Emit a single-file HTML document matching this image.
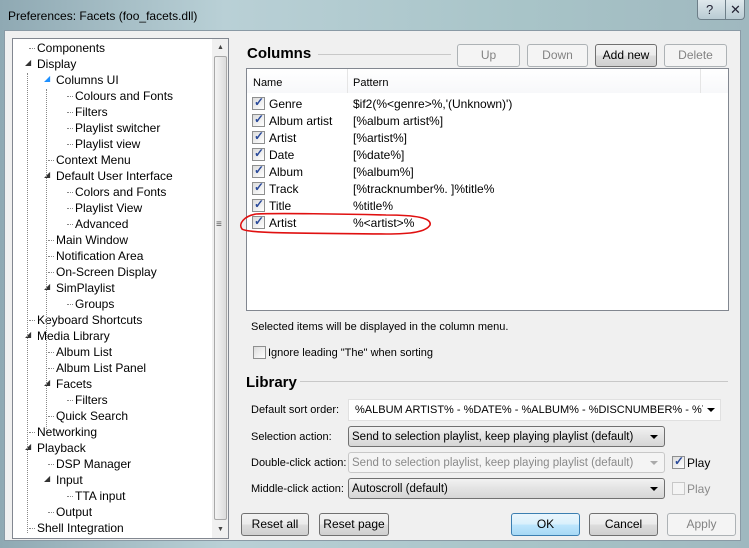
<!DOCTYPE html>
<html><head><meta charset="utf-8"><style>
*{margin:0;padding:0;box-sizing:border-box}
body{width:749px;height:548px;overflow:hidden;position:relative;font-family:"Liberation Sans",sans-serif;font-size:11px;color:#000;background:linear-gradient(90deg,#8fa9b3,#b9d0d6 30%,#a8c4c8 70%,#9fb8bf)}
.a{position:absolute;white-space:nowrap}
.client{position:absolute;left:4px;top:30px;width:737px;height:511px;background:#f0f0f0;border:1px solid #8a9aa5}
.tree{position:absolute;left:12px;top:38px;width:217px;height:501px;background:#fff;border:1px solid #828790}
.sb{position:absolute;left:212px;top:39px;width:16px;height:499px;background:#f0f0f0}
.btn{position:absolute;height:23px;border:1px solid #707070;border-radius:3px;background:linear-gradient(#f2f2f2,#ebebeb 50%,#dddddd 51%,#cfcfcf);text-align:center;line-height:21px;font-size:12px}
.dis{border-color:#adb2b5;background:#f4f4f4;color:#838383}
.cb{position:absolute;width:13px;height:13px;border:1px solid #8e8f8f;background:linear-gradient(135deg,#dcdcdc,#fff)}
.ck::after{content:"✓";position:absolute;left:1px;top:-3px;font-size:12px;color:#2a4a9a;font-weight:bold}
.sel{position:absolute;height:21px;border:1px solid #707070;border-radius:3px;background:linear-gradient(#f2f2f2,#e3e3e3 50%,#d6d6d6);font-size:11.5px;line-height:20px;padding-left:3px;overflow:hidden}
.arr{position:absolute;right:6px;top:8px;width:0;height:0;border-left:4px solid transparent;border-right:4px solid transparent;border-top:4px solid #000}
.h{font-weight:bold;font-size:15px}
</style></head><body>
<div class="a" style="left:8px;top:9px;font-size:12px;color:#000">Preferences: Facets (foo_facets.dll)</div>
<div class="a" style="left:697px;top:0;width:48px;height:20px;border:1px solid #6d7e88;border-top:none;border-radius:0 0 4px 4px;background:linear-gradient(#dfe8ec,#b9cbd3)"></div>
<div class="a" style="left:725px;top:0;width:1px;height:20px;background:#6d7e88"></div>
<div class="a" style="left:706px;top:2px;font-size:13px;color:#223">?</div>
<div class="a" style="left:730px;top:2px;font-size:13px;color:#223">✕</div>
<div class="client"></div>
<div class="tree"></div>
<div class="sb"></div>
<div class="a" style="left:214px;top:56px;width:13px;height:464px;border:1px solid #a8a8a8;border-radius:2px;background:linear-gradient(90deg,#f3f3f3,#dcdcdc)"></div>
<div class="a" style="left:216px;top:219px;font-size:10px;color:#555">≡</div>
<div class="a" style="left:217px;top:44px;font-size:7px;color:#444">▲</div>
<div class="a" style="left:217px;top:526px;font-size:7px;color:#444">▼</div>
<div id="t"></div>
<div class="a h" style="left:247px;top:45px">Columns</div>
<div class="a" style="left:318px;top:54px;width:133px;height:1px;background:#c8c8c8"></div>
<div class="btn dis" style="left:457px;top:44px;width:63px">Up</div>
<div class="btn dis" style="left:527px;top:44px;width:61px">Down</div>
<div class="btn" style="left:595px;top:44px;width:62px">Add new</div>
<div class="btn dis" style="left:664px;top:44px;width:63px">Delete</div>
<div class="a" style="left:246px;top:68px;width:483px;height:243px;background:#fff;border:1px solid #828790"></div>
<div class="a" style="left:247px;top:69px;width:481px;height:24px;background:linear-gradient(#fff,#f7f8fa)"></div>
<div class="a" style="left:347px;top:69px;width:1px;height:24px;background:#e5e5e5"></div>
<div class="a" style="left:700px;top:69px;width:1px;height:24px;background:#e5e5e5"></div>
<div class="a" style="left:253px;top:77px">Name</div>
<div class="a" style="left:353px;top:77px">Pattern</div>
<div id="r"></div>
<svg class="a" style="left:236px;top:210px" width="202" height="28"><path d="M20 4 C8 6 2 14 6 19 C12 24 80 23 150 24 C175 24 190 22 194 15 C196 8 180 5 150 5 C110 4 40 3 20 4" fill="none" stroke="#e01010" stroke-width="1.6"/></svg>
<div class="a" style="left:251px;top:321px">Selected items will be displayed in the column menu.</div>
<div class="cb" style="left:253px;top:346px"></div>
<div class="a" style="left:268px;top:347px">Ignore leading "The" when sorting</div>
<div class="a h" style="left:246px;top:374px">Library</div>
<div class="a" style="left:300px;top:381px;width:428px;height:1px;background:#c8c8c8"></div>
<div class="a" style="left:251px;top:404px">Default sort order:</div>
<div class="a" style="left:348px;top:399px;width:373px;height:22px;background:#fff;border:1px solid #e0e0e0;padding:4px 0 0 6px;font-size:11px;overflow:hidden">%ALBUM ARTIST% - %DATE% - %ALBUM% - %DISCNUMBER% - %TR</div>
<div class="a" style="left:703px;top:400px;width:17px;height:20px;background:#fff"><span class="arr" style="top:8px;right:5px"></span></div>
<div class="a" style="left:251px;top:431px">Selection action:</div>
<div class="sel" style="left:348px;top:426px;width:317px">Send to selection playlist, keep playing playlist (default)<span class="arr"></span></div>
<div class="a" style="left:251px;top:457px">Double-click action:</div>
<div class="sel" style="left:348px;top:452px;width:317px;border-color:#c8c8c8;background:#f4f4f4;color:#8a8a8a">Send to selection playlist, keep playing playlist (default)<span class="arr" style="border-top-color:#aaa"></span></div>
<div class="cb ck" style="left:672px;top:456px"></div>
<div class="a" style="left:687px;top:456px;font-size:12px">Play</div>
<div class="a" style="left:251px;top:483px">Middle-click action:</div>
<div class="sel" style="left:348px;top:478px;width:317px">Autoscroll (default)<span class="arr"></span></div>
<div class="cb" style="left:672px;top:482px;border-color:#c8c8c8;background:#f4f4f4"></div>
<div class="a" style="left:687px;top:482px;color:#8a8a8a;font-size:12px">Play</div>
<div class="btn" style="left:241px;top:513px;width:68px">Reset all</div>
<div class="btn" style="left:319px;top:513px;width:70px">Reset page</div>
<div class="btn" style="left:511px;top:513px;width:69px;border-color:#3c7fb1;background:linear-gradient(#eaf6fd,#d9f0fc 50%,#bee6fd 51%,#a7d9f5)">OK</div>
<div class="btn" style="left:589px;top:513px;width:69px">Cancel</div>
<div class="btn dis" style="left:667px;top:513px;width:69px">Apply</div>
<script>
var T=[["Components",0,0],["Display",0,1],["Columns UI",1,2],["Colours and Fonts",2,0],["Filters",2,0],["Playlist switcher",2,0],["Playlist view",2,0],["Context Menu",1,0],["Default User Interface",1,1],["Colors and Fonts",2,0],["Playlist View",2,0],["Advanced",2,0],["Main Window",1,0],["Notification Area",1,0],["On-Screen Display",1,0],["SimPlaylist",1,1],["Groups",2,0],["Keyboard Shortcuts",0,0],["Media Library",0,1],["Album List",1,0],["Album List Panel",1,0],["Facets",1,1],["Filters",2,0],["Quick Search",1,0],["Networking",0,0],["Playback",0,1],["DSP Manager",1,0],["Input",1,1],["TTA input",2,0],["Output",1,0],["Shell Integration",0,0]];
var h="";T.forEach(function(t,i){var y=41+i*16,x=37+t[1]*19;
if(t[2])h+='<div class="a" style="left:'+(x-12)+'px;top:'+(y+1)+'px;font-size:8px;color:'+(t[2]==2?'#1e90ff':'#333')+'">◢</div>';
else h+='<div class="a" style="left:'+(x-8)+'px;top:'+(y+7)+'px;width:6px;border-top:1px dotted #888"></div>';
h+='<div class="a" style="left:'+x+'px;top:'+y+'px;font-size:12px">'+t[0]+'</div>';});
h+='<div class="a" style="left:27px;top:73px;height:460px;border-left:1px dotted #888"></div>';
h+='<div class="a" style="left:46px;top:89px;height:340px;border-left:1px dotted #888"></div>';
document.getElementById("t").innerHTML=h;
var R=[["Genre","$if2(%&lt;genre&gt;%,'(Unknown)')"],["Album artist","[%album artist%]"],["Artist","[%artist%]"],["Date","[%date%]"],["Album","[%album%]"],["Track","[%tracknumber%. ]%title%"],["Title","%title%"],["Artist","%&lt;artist&gt;%"]];
h="";R.forEach(function(r,i){var y=97+i*17;h+='<div class="cb ck" style="left:252px;top:'+y+'px"></div><div class="a" style="left:269px;top:'+y+'px;font-size:12px">'+r[0]+'</div><div class="a" style="left:353px;top:'+y+'px;font-size:12px">'+r[1]+'</div>';});
document.getElementById("r").innerHTML=h;
</script>
</body></html>
